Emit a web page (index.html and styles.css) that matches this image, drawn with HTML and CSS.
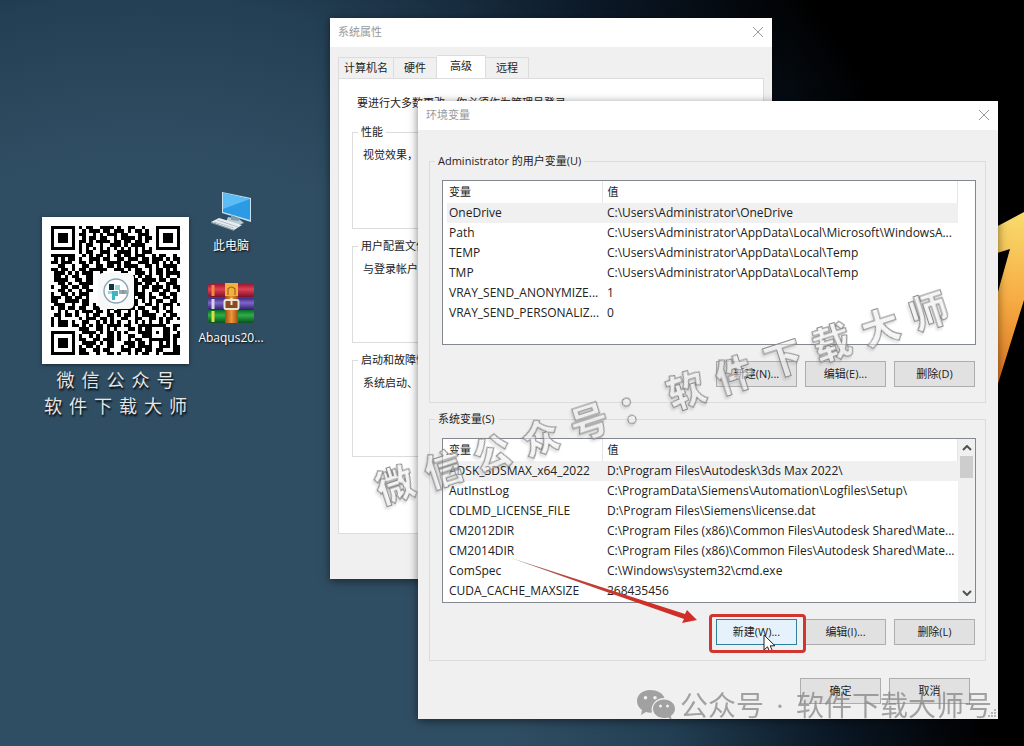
FILE: index.html
```html
<!DOCTYPE html>
<html lang="zh-CN">
<head>
  <meta charset="UTF-8" />
  <meta name="viewport" content="width=device-width, initial-scale=1.0"/>
  <title>环境变量</title>
  <link rel="stylesheet" href="styles.css">
</head>
<body>

<div class="desktop">

  <!-- wallpaper shape -->
  <svg class="wall-shape" viewBox="0 0 30 180" aria-hidden="true">
    <defs>
      <linearGradient id="gold" x1="0" y1="0" x2="0" y2="1">
        <stop offset="0" stop-color="#f8dc6c"/>
        <stop offset="0.5" stop-color="#f7ab43"/>
        <stop offset="1" stop-color="#d9701f"/>
      </linearGradient>
    </defs>
    <path d="M0 18 L30 2 L30 90 L2 180 L0 180 V96 L16 39 L0 44 Z" fill="url(#gold)"/>
  </svg>

  <!-- QR CARD -->
  <div class="qr-card">
    <div class="qr">
      <svg id="qr" viewBox="0 0 37 37" shape-rendering="crispEdges" role="img" aria-label="二维码"></svg>
      <svg class="qr-logo" viewBox="0 0 36 36" aria-hidden="true">
        <rect width="36" height="36" rx="5" fill="#f7f9f9"/>
        <circle cx="18" cy="18" r="12" fill="#fff" stroke="#8fa3b5" stroke-width="1.4"/>
        <path d="M11 11h5v6h-5z" fill="#0f3846"/>
        <path d="M17 12h5v5h-5zM10 18h5v3h-5z" fill="#8edbdd"/>
        <path d="M14 18h6v5h-3v4h-3z" fill="#3eb6bd"/>
        <path d="M21 18h3M21 20h3M25 17v4M26 18h3M26 20h3" stroke="#37505c" stroke-width="1.2"/>
      </svg>
    </div>
    <div class="qr-caption"><span>微</span><span>信</span><span>公</span><span>众</span><span>号</span></div>
    <div class="qr-caption"><span>软</span><span>件</span><span>下</span><span>载</span><span>大</span><span>师</span></div>
  </div>

  <!-- DESKTOP ICONS -->
  <div class="icons">
    <a href="#" class="icon">
      <svg width="44" height="42" viewBox="0 0 44 42" aria-hidden="true">
        <path d="M13 1 L42 7 V31 L13 22 Z" fill="#c9e2ef"/>
        <path d="M14 2 L41 8 V29 L14 21 Z" fill="#2b9be6"/>
        <path d="M14 2 L41 8 L14 18 Z" fill="#5cbcf4"/>
        <path d="M19 26 L30 28 L35 32 L26 35 L17 31 Z" fill="#b7cbd6"/>
        <path d="M22 24 L30 27 V30 L22 29 Z" fill="#7f99a8"/>
        <path d="M2 31 L10 27 L33 34 L25 39 Z" fill="#e7edf0"/>
        <path d="M5 31 L25 37 M8 29 L29 36" stroke="#a7b4bc" stroke-width="0.8"/>
        <path d="M2 31 L25 39 V40 L2 32 Z" fill="#8b9ca6"/>
      </svg>
      <span>此电脑</span>
    </a>
    <a href="#" class="icon">
      <svg width="48" height="42" viewBox="0 0 48 42" aria-hidden="true">
        <defs>
          <linearGradient id="red" x1="0" y1="0" x2="0" y2="1"><stop offset="0" stop-color="#9c1730"/><stop offset="0.4" stop-color="#df4255"/><stop offset="1" stop-color="#7d1026"/></linearGradient>
          <linearGradient id="violet" x1="0" y1="0" x2="0" y2="1"><stop offset="0" stop-color="#3b2a83"/><stop offset="0.4" stop-color="#7e66c8"/><stop offset="1" stop-color="#2d1e69"/></linearGradient>
          <linearGradient id="green" x1="0" y1="0" x2="0" y2="1"><stop offset="0" stop-color="#0a6a2a"/><stop offset="0.4" stop-color="#2eaf45"/><stop offset="1" stop-color="#07501f"/></linearGradient>
          <linearGradient id="belt" x1="0" y1="0" x2="1" y2="0"><stop offset="0" stop-color="#9e4b14"/><stop offset="0.5" stop-color="#ed9a35"/><stop offset="1" stop-color="#9e4b14"/></linearGradient>
        </defs>
        <rect x="1" y="1" width="46" height="13" rx="2" fill="url(#red)"/>
        <rect x="1" y="15" width="46" height="12" rx="2" fill="url(#violet)"/>
        <rect x="1" y="27" width="46" height="13" rx="2" fill="url(#green)"/>
        <path d="M6 2v11" stroke="#f08a3c" stroke-width="3"/>
        <path d="M6 28v11" stroke="#e8dc3e" stroke-width="3"/>
        <path d="M6 16v10" stroke="#d8d3e6" stroke-width="3"/>
        <rect x="18" y="0" width="13" height="40" fill="url(#belt)"/>
        <path d="M18 0h13v13H18z" fill="#f2b33c"/>
        <path d="M21 12V6q3.500-4 7 0v6" fill="none" stroke="#a7611b" stroke-width="1.2"/>
        <rect x="17.500" y="17" width="14" height="9" rx="1.500" fill="#8a4a22" stroke="#e9e4dc" stroke-width="2"/>
        <path d="M24.500 15v7" stroke="#f6e7cf" stroke-width="2"/>
      </svg>
      <span>Abaqus20...</span>
    </a>
  </div>

  <!-- SYSTEM PROPERTIES -->
  <section class="window props">
    <header class="titlebar">
      <h2>系统属性</h2>
      <button type="button" class="close" aria-label="关闭"><svg width="12" height="12" viewBox="0 0 12 12"><path d="M1 1L11 11M11 1L1 11"/></svg></button>
    </header>
    <div class="props-body">
      <nav class="tabs">
        <button type="button">计算机名</button>
        <button type="button">硬件</button>
        <button type="button" class="active">高级</button>
        <button type="button">远程</button>
      </nav>
      <div class="panel">
        <p>要进行大多数更改，你必须作为管理员登录。</p>
        <fieldset>
          <legend>性能</legend>
          <p>视觉效果，处理器计划，内存使用，以及虚拟内存</p>
        </fieldset>
        <fieldset>
          <legend>用户配置文件</legend>
          <p>与登录帐户相关的桌面设置</p>
        </fieldset>
        <fieldset>
          <legend>启动和故障恢复</legend>
          <p>系统启动、系统故障和调试信息</p>
        </fieldset>
      </div>
    </div>
  </section>

  <!-- ENVIRONMENT VARIABLES -->
  <section class="window env">
    <header class="titlebar">
      <h2>环境变量</h2>
      <button type="button" class="close" aria-label="关闭"><svg width="12" height="12" viewBox="0 0 12 12"><path d="M1 1L11 11M11 1L1 11"/></svg></button>
    </header>
    <div class="env-body">
      <fieldset>
        <legend>Administrator 的用户变量(U)</legend>
        <div class="list">
          <table>
            <thead>
              <tr><th class="name">变量</th><th>值</th></tr>
            </thead>
            <tbody>
              <tr class="selected"><td>OneDrive</td><td>C:\Users\Administrator\OneDrive</td></tr>
              <tr><td>Path</td><td>C:\Users\Administrator\AppData\Local\Microsoft\WindowsA...</td></tr>
              <tr><td>TEMP</td><td>C:\Users\Administrator\AppData\Local\Temp</td></tr>
              <tr><td>TMP</td><td>C:\Users\Administrator\AppData\Local\Temp</td></tr>
              <tr><td>VRAY_SEND_ANONYMIZE...</td><td>1</td></tr>
              <tr><td>VRAY_SEND_PERSONALIZ...</td><td>0</td></tr>
            </tbody>
          </table>
        </div>
        <div class="buttons">
          <button type="button" class="btn">新建(N)...</button>
          <button type="button" class="btn">编辑(E)...</button>
          <button type="button" class="btn">删除(D)</button>
        </div>
      </fieldset>

      <fieldset>
        <legend>系统变量(S)</legend>
        <div class="list">
          <table>
            <thead>
              <tr><th class="name">变量</th><th>值</th></tr>
            </thead>
            <tbody>
              <tr class="selected"><td>ADSK_3DSMAX_x64_2022</td><td>D:\Program Files\Autodesk\3ds Max 2022\</td></tr>
              <tr><td>AutInstLog</td><td>C:\ProgramData\Siemens\Automation\Logfiles\Setup\</td></tr>
              <tr><td>CDLMD_LICENSE_FILE</td><td>D:\Program Files\Siemens\license.dat</td></tr>
              <tr><td>CM2012DIR</td><td>C:\Program Files (x86)\Common Files\Autodesk Shared\Mate...</td></tr>
              <tr><td>CM2014DIR</td><td>C:\Program Files (x86)\Common Files\Autodesk Shared\Mate...</td></tr>
              <tr><td>ComSpec</td><td>C:\Windows\system32\cmd.exe</td></tr>
              <tr><td>CUDA_CACHE_MAXSIZE</td><td>268435456</td></tr>
            </tbody>
          </table>
          <div class="scrollbar">
            <svg width="10" height="6" viewBox="0 0 10 6"><path d="M1 5L5 1L9 5"/></svg>
            <div class="thumb"></div>
            <svg width="10" height="6" viewBox="0 0 10 6"><path d="M1 1L5 5L9 1"/></svg>
          </div>
        </div>
        <div class="buttons">
          <div class="marked">
            <button type="button" class="btn hover">新建(W)...</button>
            <!-- callout arrow -->
            <svg class="arrow" width="187" height="68" viewBox="0 0 187 68" aria-hidden="true">
              <defs>
                <linearGradient id="shaft" x1="0" y1="0" x2="1" y2="0">
                  <stop offset="0" stop-color="#8d7b72"/>
                  <stop offset="0.3" stop-color="#b8473f"/>
                  <stop offset="0.7" stop-color="#cf2f28"/>
                </linearGradient>
              </defs>
              <path d="M0 0 L174 56 L176 52 L186 62 L171 65 L173 61 L90 32 Z" fill="url(#shaft)"/>
            </svg>
            <svg class="cursor" width="14" height="20" viewBox="0 0 14 20" aria-hidden="true">
              <path d="M1 1 V16 L4.500 12.800 L7 18.500 L9.600 17.300 L7.200 11.800 H12 Z" fill="#fff" stroke="#222"/>
            </svg>
          </div>
          <button type="button" class="btn">编辑(I)...</button>
          <button type="button" class="btn">删除(L)</button>
        </div>
      </fieldset>

      <div class="buttons footer">
        <button type="button" class="btn">确定</button>
        <button type="button" class="btn">取消</button>
      </div>
    </div>
    <svg class="grip" width="9" height="9" viewBox="0 0 9 9" aria-hidden="true">
      <path d="M6 0h2v2H6zM3 3h2v2H3zM6 3h2v2H6zM0 6h2v2H0zM3 6h2v2H3zM6 6h2v2H6z" fill="#b5b5b5"/>
    </svg>
  </section>

  <!-- WATERMARKS -->
  <div class="stamp">
    <span>微</span><span>信</span><span>公</span><span>众</span><span>号</span><span>：</span><span>软</span><span>件</span><span>下</span><span>载</span><span>大</span><span>师</span>
  </div>

  <div class="account">
    <svg width="40" height="32" viewBox="0 0 40 32" aria-hidden="true">
      <path fill-rule="evenodd" d="M14 1C6 1 1 6 1 12c0 4 2 7 5 9l-1 5 5-3c2 .6 4 .8 6 .6C14 16 20 9 28 9h.5C27 4 21 1 14 1zM9.500 7a1.800 1.800 0 1 1 0 3.600 1.800 1.800 0 0 1 0-3.600zM19 7a1.800 1.800 0 1 1 0 3.600A1.800 1.800 0 0 1 19 7z"/>
      <path fill-rule="evenodd" d="M28 10.500c-6 0-11 4-11 9.300S22 29 28 29c1.300 0 2.600-.2 3.800-.6l4 2.200-1-3.600c2.600-1.700 4.200-4.200 4.200-7.200 0-5.300-5-9.300-11-9.300zM24.500 15.500a1.500 1.500 0 1 1 0 3 1.500 1.500 0 0 1 0-3zM31.500 15.500a1.500 1.500 0 1 1 0 3 1.500 1.500 0 0 1 0-3z"/>
    </svg>
    <span>公众号</span>
    <span class="dot">·</span>
    <span>软件下载大师号</span>
  </div>

</div>

<script>
  // QR modules, one string per row (# = dark)
  const rows = [
    '#######.#.##..####.#..##..#...#######',
    '#.....#..#.###.##.###.#.##.#..#.....#',
    '#.###.#.##..#.#.###.##...###..#.###.#',
    '#.###.#..#.##.##..#.####.#.##.#.###.#',
    '#.###.#.##.#.####.##.##.##.#..#.###.#',
    '#.....#.#.##..#..###.#.####...#.....#',
    '#######.#.#.#.#.#.#.#.#.#.#.#.#######',
    '........#.##..###..####.#.###........',
    '#######..#.#.##.#.##.##.###..#.##..#.',
    '.#.#.##.#..###.##..##.###.##.###.#.##',
    '##.###..##.#.#..####.##..###.##.#.#.#',
    '..##..#..##..##.##.#.####..##.#.####.',
    '##.##.#.##.#####..###.#.##..#.##.#.#.',
    '.###.#.#.###..#.....##..###.#.##.####',
    '.##.#.##..##..........##.#.##..#.#..#',
    '.####..##.##...........##.####.##.##.',
    '..##.#..####...........###.##.#..###.',
    '#..##.##.##............##.##.###.#.##',
    '..##.#..#.##...........##.#..##.##..#',
    '#..##.#.###............####.#..##.##.',
    '###.##.##.#............#.##.##..##.#.',
    '##..####.##............##.#.#.##..##.',
    '.###..#..##.#.........###..##.#.###.#',
    '#.##.##.##..##..##.#####.##..##.#.#..',
    '..#.#..#.###.##.#.##..#.#.##..#..##..',
    '.##.##.#..#.##..##.#.##.#.####..#.##.',
    '#.#.....#.###.##.#..##..##..##.#.##.#',
    '#.###.#..##..#.#.#.#..#.#.#.#..#.#...',
    '#.###.##.#.#.##.####.##..########..##',
    '........###..##.#.#...##.#.##...##.#.',
    '#######..####.#.##.#.#...####.#.##..#',
    '#.....#.#..#.#..##.#..##..###...##.##',
    '#.###.#.##..##.###.#..#.##..######.#.',
    '#.###.#..####.#.##...###.##.#..#.#.#.',
    '#.###.#.#.##.#..##..#.##.####..###.##',
    '#.....#.##..##.##...###.##.##.##...##',
    '#######.###..#..##.#..#.#.##..#.#####'
  ];
  const svg = document.getElementById('qr');
  let d = '';
  rows.forEach((row, y) => {
    [...row].forEach((c, x) => {
      if (c === '#') d += 'M' + x + ' ' + y + 'h1v1h-1z';
    });
  });
  const path = document.createElementNS('http://www.w3.org/2000/svg', 'path');
  path.setAttribute('d', d);
  svg.appendChild(path);
</script>

</body>
</html>
```

FILE: styles.css
```css
* {
  box-sizing: border-box;
}

body {
  margin: 0;
  font-family: 'Open Sans', 'Noto Sans CJK SC', sans-serif;
  font-size: 11px;
  line-height: 18px;
  color: #222;
}

h2, p {
  margin: 0;
  font-size: 11px;
  font-weight: normal;
}

button {
  font: inherit;
  color: inherit;
  padding: 0;
}

.desktop {
  position: relative;
  min-height: 100vh;
  overflow: hidden;
  background: radial-gradient(ellipse 84% 120% at 14% 76%, #304e63 0%, #304e63 46%, #233f54 64%, #0b1826 82%, #000 100%) #000;
}

.wall-shape {
  position: absolute;
  right: 0;
  top: 210px;
  width: 30px;
}

/* QR card */
.qr-card {
  position: absolute;
  left: 42px;
  top: 217px;
  width: 147px;
  color: #e6e6e6;
}

.qr {
  position: relative;
  padding: 9px;
  margin-bottom: 3px;
  background: #fff;
  box-shadow: 0 1px 4px rgba(0, 0, 0, 0.5);
}

.qr svg {
  display: block;
  width: 100%;
}

.qr .qr-logo {
  position: absolute;
  left: 56px;
  top: 56px;
  width: 36px;
}

.qr-caption {
  display: flex;
  justify-content: center;
  gap: 7px;
  font-size: 18px;
  line-height: 26px;
  text-shadow: 1px 2px 2px #000;
}

/* Desktop icons */
.icons {
  position: absolute;
  left: 194px;
  top: 191px;
  width: 74px;
  display: flex;
  flex-direction: column;
  gap: 28px;
}

.icon {
  display: flex;
  flex-direction: column;
  align-items: center;
  gap: 4px;
  color: #fff;
  font-size: 12px;
  text-decoration: none;
  text-shadow: 1px 1px 2px #000;
}

/* Windows */
.window {
  position: absolute;
  background: #f0f0f0;
  box-shadow: 0 2px 9px rgba(0, 0, 0, 0.5);
}

.titlebar {
  display: flex;
  align-items: center;
  justify-content: space-between;
  height: 29px;
  padding: 0 8px 2px;
  background: #fff;
  color: #999;
}

.close {
  display: flex;
  border: none;
  background: none;
}

.close path {
  stroke: #999;
  fill: none;
}

fieldset {
  margin: 0 0 8px;
  padding: 0;
  min-width: 0;
  border: 1px solid #dcdcdc;
}

legend {
  height: 18px;
  margin-left: 5px;
  padding: 0 3px;
}

/* System properties */
.props {
  left: 330px;
  right: 252px;
  top: 18px;
}

.props-body {
  padding: 8px 8px 45px;
}

.tabs {
  display: flex;
  align-items: flex-end;
}

.tabs button {
  height: 21px;
  padding: 0 10px;
  border: 1px solid #dcdcdc;
  border-width: 1px 1px 0 0;
  background: #f0f0f0;
}

.tabs button:first-child {
  padding: 0 5px;
  border-left-width: 1px;
}

.tabs .active {
  height: 23px;
  padding: 0 13px 3px;
  background: #fff;
}

.panel {
  padding: 15px 14px 68px 13px;
  border: 1px solid #dcdcdc;
  background: #fff;
}

.panel > p {
  margin: 0 0 11px 5px;
}

.panel fieldset {
  height: 106px;
}

.panel fieldset p {
  padding: 5px 10px;
}

/* Environment variables */
.env {
  left: 418px;
  right: 26px;
  top: 101px;
}

.env-body {
  padding: 22px 12px 15px 11px;
}

.env fieldset {
  margin-bottom: 7px;
}

.list {
  display: flex;
  align-items: flex-start;
  height: 165px;
  margin: 10px 9px 0 12px;
  border: 1px solid #828790;
  background: #fff;
  overflow: hidden;
}

.list table {
  flex: 1;
  table-layout: fixed;
  border-collapse: collapse;
  margin: 0 17px 0 4px;
}

.list th,
.list td {
  height: 20px;
  padding: 0 0 0 2px;
  text-align: left;
  font-weight: normal;
  white-space: nowrap;
}

.list td {
  font-size: 12px;
}

.list th {
  height: 22px;
  border-right: 1px solid #e5e5e5;
}

.list .name {
  width: 155px;
}

.list td + td,
.list th + th {
  padding-left: 5px;
}

.list .selected {
  background: #f0f0f0;
}

.list table:not(:last-child) {
  margin-right: 0;
}

.scrollbar {
  display: flex;
  flex-direction: column;
  align-items: center;
  align-self: stretch;
  width: 17px;
  padding: 6px 1px;
  background: #f0f0f0;
}

.scrollbar path {
  fill: none;
  stroke: #505050;
  stroke-width: 2;
}

.thumb {
  width: 13px;
  height: 22px;
  margin: 5px 0 auto;
  background: #cdcdcd;
}

.buttons {
  display: flex;
  justify-content: flex-end;
  gap: 8px;
  margin: 16px 10px 15px 0;
}

.btn {
  display: block;
  width: 81px;
  height: 26px;
  border: 1px solid #adadad;
  background: #e1e1e1;
}

.btn.hover {
  border-color: #2f7f9f;
  background: #e5f1fb;
}

.footer {
  margin: 17px 16px 0 0;
}

/* red callout around the hovered button */
.marked {
  position: relative;
}

.marked::after {
  content: '';
  position: absolute;
  inset: -5px -9px -8px -7px;
  border: 3px solid #d0352f;
  border-radius: 4px;
}

.arrow {
  position: absolute;
  right: 99px;
  bottom: 19px;
}

.cursor {
  position: absolute;
  left: 47px;
  top: 15px;
}

.grip {
  position: absolute;
  right: 1px;
  bottom: 1px;
}

/* Watermarks */
.stamp {
  position: absolute;
  left: 362px;
  top: 374px;
  display: flex;
  gap: 13px;
  font-size: 38px;
  font-weight: 900;
  line-height: 46px;
  color: rgba(255, 255, 255, 0.5);
  -webkit-text-stroke: 1px #858585;
  filter: drop-shadow(-2px 2px 1px rgba(0, 0, 0, 0.15));
  transform: rotate(-18deg);
  pointer-events: none;
}

.account {
  position: absolute;
  right: 32px;
  bottom: 23px;
  display: flex;
  align-items: center;
  font-size: 28px;
  line-height: 36px;
  color: #808080;
  fill: #808080;
  opacity: 0.7;
  pointer-events: none;
}

.account svg {
  margin-right: 4px;
}

.account .dot {
  width: 32px;
  text-align: center;
}
```
